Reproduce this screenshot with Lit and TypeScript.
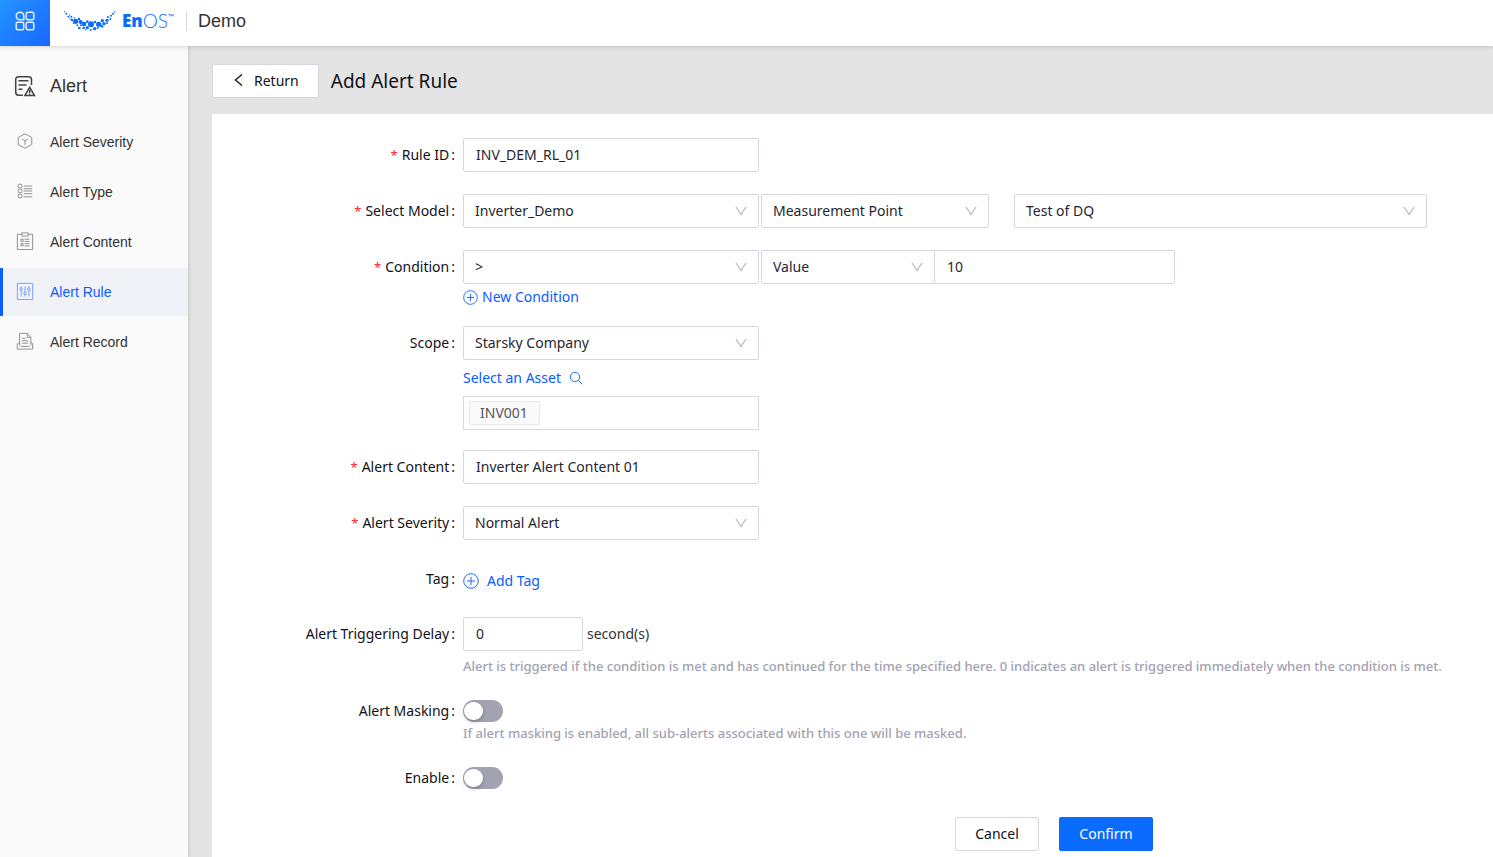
import { LitElement, html, css, svg, nothing } from "lit";
import { customElement } from "lit/decorators.js";
import { classMap } from "lit/directives/class-map.js";

const LOGO_DOTS: number[][] = [
  [194, 38, 2], [199, 44, 3], [209, 48, 2], [205, 53, 3], [214, 53, 3], [210, 60, 2], [216, 63, 4], [223, 57, 2],
  [220, 73, 2], [227, 67, 8], [232, 79, 3], [237, 60, 4], [238, 87, 4], [242, 69, 6], [243, 79, 3], [252, 75, 7],
  [251, 87, 4], [257, 93, 2], [262, 68, 4], [262, 86, 5], [273, 76, 9], [272, 93, 3], [284, 89, 5], [285, 69, 4],
  [296, 76, 8], [293, 87, 3], [307, 65, 5], [306, 82, 4], [312, 74, 5], [321, 64, 5], [321, 73, 3], [324, 54, 3],
  [331, 60, 3], [333, 50, 3], [339, 44, 3], [344, 39, 2],
];

const MENU_ICONS = {
  severity: svg`<path d="M10 2l7.500 4v8L10 18l-7.500-4V6z"/><path d="M6.500 7.500L10 9.800l3.500-2.300M10 9.800v4.500"/>`,
  type: svg`<rect x="2.500" y="2.500" width="4" height="4" rx="1"/><rect x="2.500" y="8" width="4" height="4" rx="1"/><rect x="2.500" y="13.500" width="4" height="4" rx="1"/><path d="M8.500 4.500H18M8.500 7.500H18M8.500 10H18M8.500 13H18M8.500 16.500H18"/>`,
  content: svg`<path d="M6.500 2.500h-5v17h17v-17h-5"/><path d="M6.500 1h7v3.500h-7zM5.500 8h2.400v2.400H5.500zM5.500 13h2.400v2.400H5.500zM9.500 8H15M9.500 10.500H15M9.500 13H15M9.500 15.500H15"/>`,
  rule: svg`<path d="M1.500 1.500h17v18h-17z"/><path d="M5.700 5v1.500M5.700 9.500V16M10 5v6M10 14v2M14.300 5v1.500M14.300 9.500V16"/><circle cx="5.700" cy="8" r="1.500"/><circle cx="10" cy="12.500" r="1.500"/><circle cx="14.300" cy="8" r="1.500"/>`,
  record: svg`<path d="M4 15V1.500h8.500l4 4.500V15M12.500 1.500V6h4"/><path d="M4 11.500l-2.500 1.500v6h17v-6l-2-1.500M6.500 7h4M6.500 9.700h7M6.500 12.400h7M5 16h10"/>`,
};

const MENU: { label: string; icon: keyof typeof MENU_ICONS; active?: boolean }[] = [
  { label: "Alert Severity", icon: "severity" },
  { label: "Alert Type", icon: "type" },
  { label: "Alert Content", icon: "content" },
  { label: "Alert Rule", icon: "rule", active: true },
  { label: "Alert Record", icon: "record" },
];

@customElement("top-bar")
export class TopBar extends LitElement {
  static styles = css`
    :host { display: flex; align-items: center; height: 46px; background: #fff; box-shadow: 0 1px 4px rgba(0, 0, 0, 0.16); position: relative; z-index: 2; font-family: "Liberation Sans", Arial, sans-serif; }
    .apps { width: 50px; height: 46px; border: 0; padding: 0 0 4px; display: grid; place-items: center; background: linear-gradient(135deg, #2394ff, #1a66ff); }
    .brand { display: flex; align-items: center; gap: 6px; height: 42px; margin-left: 14px; padding-bottom: 4px; color: #0a6cff; text-decoration: none; }
    .word { display: flex; font: 400 19px/24px Lato, sans-serif; }
    .en { font: 800 17px/24px "Open Sans", sans-serif; }
    .os { font-weight: 300; }
    .tm { font-size: 8px; line-height: 16px; }
    .title { margin-left: 12px; padding-left: 11px; border-left: 1px solid #d9d9de; margin-bottom: 4px; font-size: 18px; line-height: 20px; color: #333; }
  `;
  render() {
    return html`
      <button class="apps" aria-label="Applications">
        <svg width="20" height="20" viewBox="0 0 20 20" fill="none" stroke="#e6eeff" stroke-width="1.500">
          <path d="M8.800 8.800H5A3.800 3.800 0 1 1 8.800 5z"/>
          <rect x="11.200" y="1.200" width="7.600" height="7.600" rx="1.500"/>
          <rect x="1.200" y="11.200" width="7.600" height="7.600" rx="1.500"/>
          <rect x="11.200" y="11.200" width="7.600" height="7.600" rx="1.500"/>
        </svg>
      </button>
      <a class="brand" href="#" aria-label="EnOS home">
        <svg width="52" height="22" viewBox="192 33 156 66" fill="currentColor">
          ${LOGO_DOTS.map(([x, y, r]) => svg`<circle cx=${x} cy=${y} r=${r}/>`)}
        </svg>
        <span class="word"><span class="en">En</span><span class="os">OS</span><span class="tm">™</span></span>
      </a>
      <span class="title">Demo</span>`;
  }
}

@customElement("side-menu")
export class SideMenu extends LitElement {
  static styles = css`
    :host { display: block; width: 188px; flex: none; background: #fafafa; box-shadow: 1px 0 3px rgba(0, 0, 0, 0.14); position: relative; z-index: 1; font-family: "Liberation Sans", Arial, sans-serif; color: #333; }
    .head { display: flex; align-items: center; gap: 14px; height: 80px; padding-left: 14px; font-size: 18px; line-height: 24px; }
    .head svg { flex: none; }
    nav { display: flex; flex-direction: column; gap: 2px; margin-top: -8px; }
    .item { display: flex; align-items: center; gap: 16px; height: 48px; padding-left: 13px; border-left: 3px solid transparent; font-size: 14px; line-height: 20px; color: #333; text-decoration: none; }
    .item svg { stroke: #858585; margin-top: -2px; }
    .item.active { background: #f0f2f8; border-left-color: #0a5cff; color: #0a5cff; }
    .item.active svg { stroke: #6f97fb; }
  `;
  render() {
    return html`
      <div class="head">
        <svg width="22" height="22" viewBox="0 0 22 22" fill="none" stroke="#444" stroke-width="1.500">
          <path d="M9 20.200H4.500Q1.700 20.200 1.700 17V4.500Q1.700 1.700 4.500 1.700H14.500Q17.500 1.700 17.500 4.500V10"/>
          <path d="M4.500 5.800h10M4.500 10h8M4.500 14.300h4"/>
          <path d="M15.700 12.300l4.800 8.200h-9.600z"/><path d="M15.700 14.500v3.500M15.700 18.600v1.200"/>
        </svg>
        <span>Alert</span>
      </div>
      <nav aria-label="Alert">
        ${MENU.map((m) => html`
          <a class=${classMap({ item: true, active: !!m.active })} href="#" aria-current=${m.active ? "page" : nothing}>
            <svg width="18" height="18" viewBox="0 0 20 20" fill="none">${MENU_ICONS[m.icon]}</svg>
            <span>${m.label}</span>
          </a>`)}
      </nav>`;
  }
}

@customElement("alert-rule-form")
export class AlertRuleForm extends LitElement {
  static styles = css`
    :host { display: block; flex: 1; background: #fff; padding: 24px 0 6px; color: #111118; font-size: 14px; line-height: 20px; }
    .row { display: grid; grid-template-columns: 251px minmax(0, 1fr); margin-bottom: 22px; }
    .row.mid { margin-bottom: 20px; }
    .row.tight { margin-bottom: 16px; }
    .row.close { margin-bottom: 12px; }
    .label { line-height: 34px; text-align: right; padding-right: 8px; }
    .label::after { content: ":"; margin-left: 2px; }
    .req::before { content: "*"; color: #f5222d; margin-right: 4px; font-size: 13px; }
    .line { display: flex; align-items: center; gap: 2px; margin-right: 66px; height: 34px; }
    .std { width: 296px; }
    .point { width: 228px; margin-right: 23px; }
    .kind { width: 174px; }
    .amount { width: 241px; margin-left: -3px; }
    .delay { width: 120px; margin-right: 2px; }
    .grow { flex: 1; }
    .select { display: grid; align-items: center; height: 34px; }
    .select select, .select svg { grid-area: 1 / 1; }
    .select select { appearance: none; width: 100%; height: 34px; margin: 0; padding: 0 32px 0 11px; border: 1px solid #d6d6e0; border-radius: 2px; background: #fff; color: #262630; font: inherit; }
    .select svg { justify-self: end; margin-right: 12px; pointer-events: none; }
    .text { box-sizing: border-box; height: 34px; margin-top: 0; margin-bottom: 0; padding: 0 12px 2px; border: 1px solid #d6d6e0; border-radius: 2px; background: #fff; color: #262630; font: inherit; }
    .unit { color: #333; }
    .link { display: flex; align-items: center; width: max-content; gap: 4px; padding: 0; border: 0; background: none; color: #0a5cff; font: inherit; height: 26px; }
    .link svg { stroke-width: 0.9; }
    .link.search { gap: 8px; height: 36px; }
    .link.tag { gap: 8px; height: 39px; padding-bottom: 2px; }
    .assets { box-sizing: border-box; display: flex; align-items: center; height: 34px; padding: 0 5px; border: 1px solid #d9d9d9; }
    .chip { box-sizing: border-box; height: 24px; padding: 0 11px 0 10px; border: 1px solid #e8e8e8; border-radius: 2px; background: #fafafa; color: #555; line-height: 22px; }
    .search-input { flex: 1; min-width: 0; border: 0; outline: 0; background: none; font: inherit; }
    .help { margin: 0; color: #a2a2b0; font-size: 13px; font-weight: 500; line-height: 31px; }
    .help.near { line-height: 23px; }
    .toggle { display: flex; padding-top: 6px; }
    .switch { appearance: none; box-sizing: border-box; width: 40px; height: 22px; margin: 0; padding: 2px 1px; border-radius: 11px; background: #a2a2b0; }
    .switch::before { content: ""; display: block; width: 19px; height: 18px; border-radius: 9px; background: #fff; box-shadow: 0 2px 4px rgba(0, 0, 0, 0.2); }
    .switch:checked { background: #0a6cff; }
    .switch:checked::before { margin-left: 19px; }
    .actions { display: flex; justify-content: flex-end; gap: 20px; padding-right: 340px; }
    .btn { height: 34px; min-width: 84px; padding: 0 19px; border: 1px solid #d6d6e0; border-radius: 2px; background: #fff; color: #111118; font: inherit; }
    .btn.primary { min-width: 94px; border-color: #0a6cff; background: #0a6cff; color: #fff; }
  `;
  private plus(size: number) {
    return html`<svg width=${size} height=${size} viewBox="0 0 16 16" fill="none" stroke="currentColor"><circle cx="8" cy="8" r="7.300"/><path d="M8 4v8M4 8h8"/></svg>`;
  }
  private select(id: string, width: string, value: string, label?: string) {
    return html`
      <div class="select ${width}">
        <select id=${id} aria-label=${label ?? nothing}><option>${value}</option></select>
        <svg width="12" height="12" viewBox="0 0 12 12" fill="none" stroke="#b4b4c0" stroke-width="1.200"><path d="M1 2l5 7.500L11 2"/></svg>
      </div>`;
  }
  render() {
    return html`
      <form @submit=${(e: Event) => e.preventDefault()}>
        <div class="row">
          <label class="label req" for="rule-id">Rule ID</label>
          <div class="line"><input class="text std" id="rule-id" value="INV_DEM_RL_01"></div>
        </div>
        <div class="row">
          <label class="label req" for="model">Select Model</label>
          <div class="line">
            ${this.select("model", "std", "Inverter_Demo")}
            ${this.select("point-type", "point", "Measurement Point", "Point type")}
            ${this.select("point", "grow", "Test of DQ", "Point")}
          </div>
        </div>
        <div class="row tight">
          <label class="label req" for="condition">Condition</label>
          <div>
            <div class="line">
              ${this.select("condition", "std", ">")}
              ${this.select("operand-type", "kind", "Value", "Operand type")}
              <input class="text amount" aria-label="Operand" value="10">
            </div>
            <button class="link" type="button">${this.plus(15)}New Condition</button>
          </div>
        </div>
        <div class="row mid">
          <label class="label" for="scope">Scope</label>
          <div>
            <div class="line">${this.select("scope", "std", "Starsky Company")}</div>
            <button class="link search" type="button">Select an Asset
              <svg width="14" height="14" viewBox="0 0 14 14" fill="none" stroke="currentColor"><circle cx="6" cy="6" r="4.700"/><path d="M9.400 9.400l3.800 3.800"/></svg>
            </button>
            <div class="assets std"><span class="chip">INV001</span><input class="search-input" aria-label="Assets"></div>
          </div>
        </div>
        <div class="row">
          <label class="label req" for="content">Alert Content</label>
          <div class="line"><input class="text std" id="content" value="Inverter Alert Content 01"></div>
        </div>
        <div class="row">
          <label class="label req" for="severity">Alert Severity</label>
          <div class="line">${this.select("severity", "std", "Normal Alert")}</div>
        </div>
        <div class="row tight">
          <label class="label" for="tag">Tag</label>
          <button class="link tag" id="tag" type="button">${this.plus(16)}Add Tag</button>
        </div>
        <div class="row close">
          <label class="label" for="delay">Alert Triggering Delay</label>
          <div>
            <div class="line"><input class="text delay" id="delay" value="0"><span class="unit">second(s)</span></div>
            <p class="help">Alert is triggered if the condition is met and has continued for the time specified here. 0 indicates an alert is triggered immediately when the condition is met.</p>
          </div>
        </div>
        <div class="row tight">
          <label class="label" for="masking">Alert Masking</label>
          <div>
            <div class="toggle"><input class="switch" type="checkbox" id="masking"></div>
            <p class="help near">If alert masking is enabled, all sub-alerts associated with this one will be masked.</p>
          </div>
        </div>
        <div class="row">
          <label class="label" for="enable">Enable</label>
          <div class="toggle"><input class="switch" type="checkbox" id="enable"></div>
        </div>
        <div class="actions">
          <button class="btn" type="button">Cancel</button>
          <button class="btn primary" type="submit">Confirm</button>
        </div>
      </form>`;
  }
}

@customElement("app-root")
export class AppRoot extends LitElement {
  static styles = css`
    :host { display: flex; flex-direction: column; min-height: 100vh; background: #e4e4e4; font-family: "Noto Sans", "Open Sans", sans-serif; font-size: 14px; }
    .body { display: flex; flex: 1; }
    main { flex: 1; min-width: 0; display: flex; flex-direction: column; padding-left: 24px; }
    .bar { display: flex; align-items: center; gap: 12px; height: 34px; margin: 18px 0 16px; }
    .return { display: flex; align-items: center; gap: 8px; height: 34px; padding: 0 19px 2px; border: 1px solid #d6d6e0; border-radius: 2px; background: #fff; color: #111118; font: inherit; }
    h1 { margin: 0; font-size: 19px; font-weight: 400; line-height: 26px; color: #111118; }
  `;
  render() {
    return html`
      <top-bar></top-bar>
      <div class="body">
        <side-menu></side-menu>
        <main>
          <div class="bar">
            <button class="return"><svg width="14" height="14" viewBox="0 0 14 14" fill="none" stroke="#222" stroke-width="1.500"><path d="M10 1.500L3.500 7l6.500 5.500"/></svg>Return</button>
            <h1>Add Alert Rule</h1>
          </div>
          <alert-rule-form></alert-rule-form>
        </main>
      </div>`;
  }
}
